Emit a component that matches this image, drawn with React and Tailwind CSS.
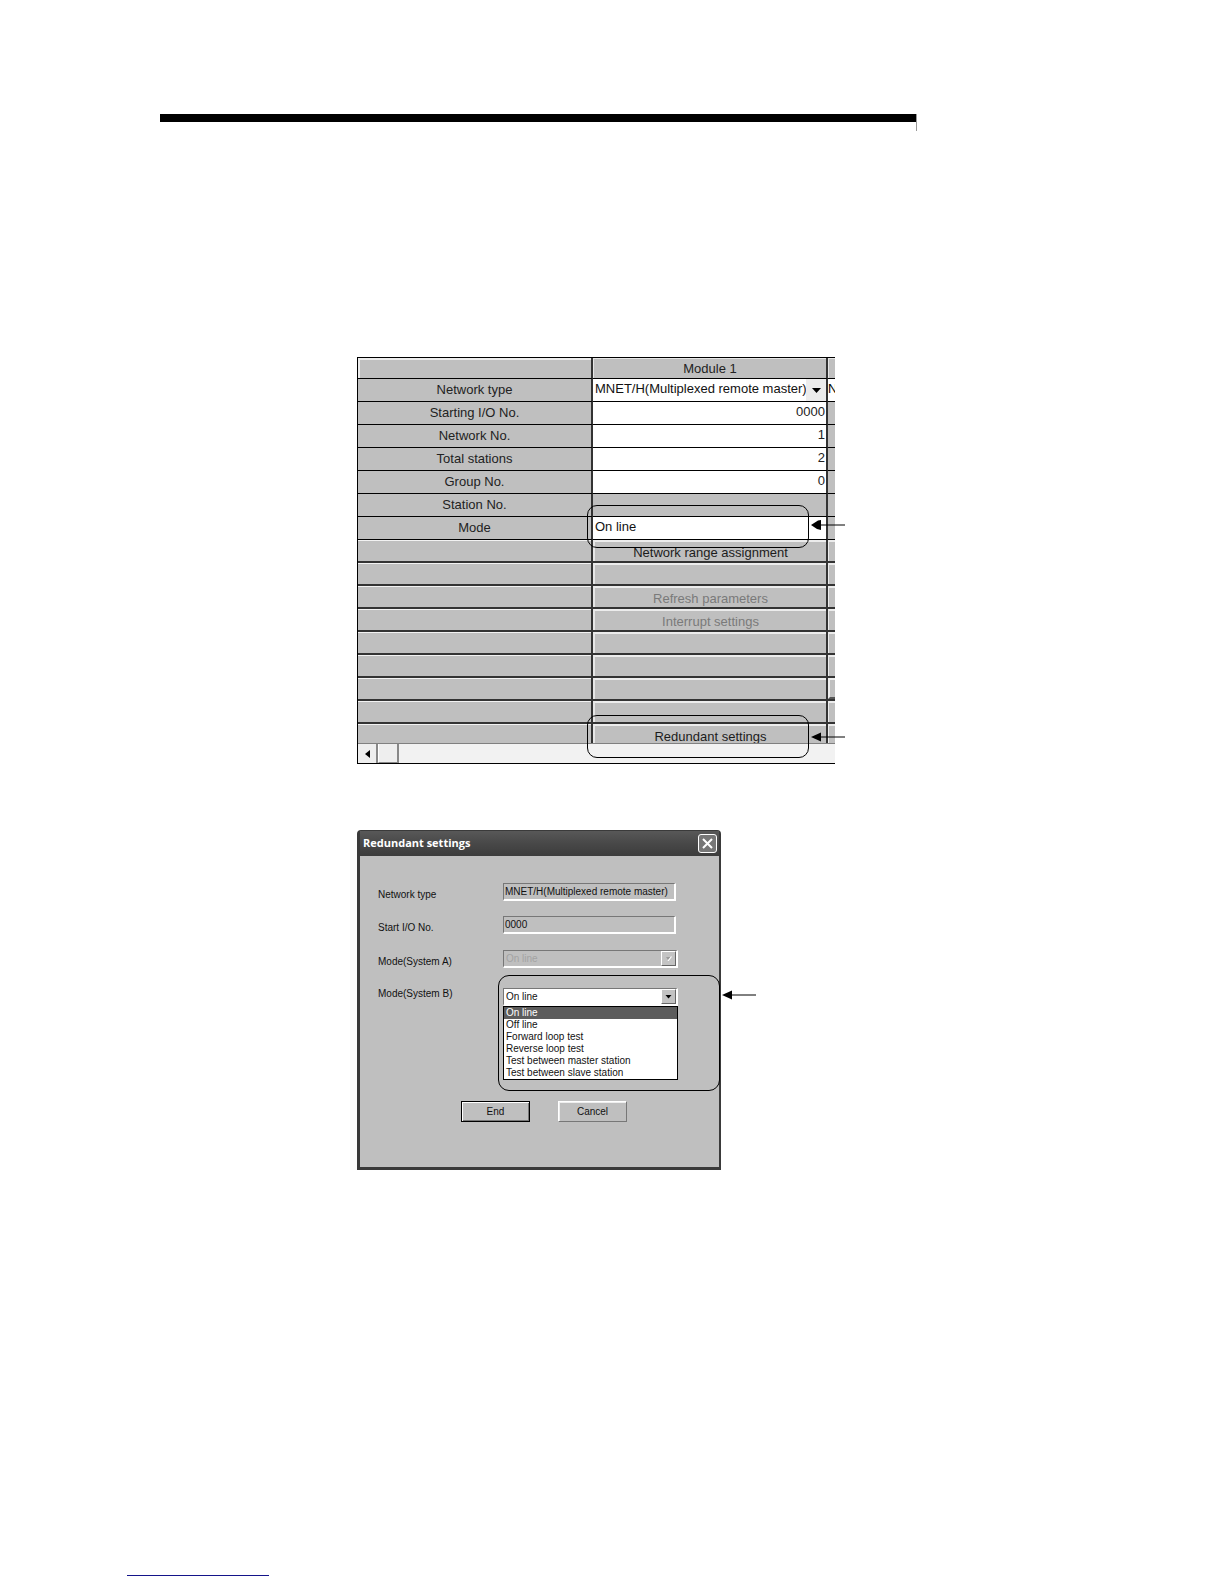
import React from "react";

function Bevel({ children, disabled, label }) {
  return (
    <button
      type="button"
      disabled={disabled}
      aria-label={label}
      className="block h-full w-full border-t-2 border-l-2 border-t-[#ececec] border-l-[#e6e6e6] bg-[#bfbfbf] text-center leading-[22px] text-[#1c1c1c] disabled:text-[#7a7a7a]"
    >
      {children}
    </button>
  );
}

function NumberCell({ id, value }) {
  return (
    <input
      id={id}
      defaultValue={value}
      className="block h-full w-full bg-white pr-px pb-1 text-right text-[#222] outline-none"
    />
  );
}

function GridSelect({ id, value, arrow }) {
  return (
    <div className="relative h-full bg-white">
      <select
        id={id}
        className="block h-full w-full appearance-none bg-white pb-1 pl-[2px] text-[#111] outline-none"
      >
        <option>{value}</option>
      </select>
      {arrow && (
        <span className="pointer-events-none absolute top-0 right-0 flex h-full w-5 items-center justify-center bg-[#ececec]">
          <svg viewBox="0 0 9 5" className="h-[5px] w-[9px]">
            <path d="M0 0h9L4.500 5z" />
          </svg>
        </span>
      )}
    </div>
  );
}

const rows = [
  { id: "network-type", label: "Network type", cell: <GridSelect id="network-type" value="MNET/H(Multiplexed remote master)" arrow />, next: "N" },
  { id: "start-io", label: "Starting I/O No.", cell: <NumberCell id="start-io" value="0000" /> },
  { id: "network-no", label: "Network No.", cell: <NumberCell id="network-no" value="1" /> },
  { id: "stations", label: "Total stations", cell: <NumberCell id="stations" value="2" /> },
  { id: "group-no", label: "Group No.", cell: <NumberCell id="group-no" value="0" /> },
  { label: "Station No." },
  { id: "mode", label: "Mode", cell: <GridSelect id="mode" value="On line" /> },
  { button: "Network range assignment" },
  { button: "" },
  { button: "Refresh parameters", disabled: true },
  { button: "Interrupt settings", disabled: true },
  { button: "" },
  { button: "" },
  { button: "", focus: true },
  { button: "" },
  { button: "Redundant settings", last: true },
];

function Arrow({ blunt }) {
  return (
    <svg viewBox="0 0 34 12" className="h-3 w-[34px]">
      <path d="M8 6h26" stroke="#000" strokeWidth="1" />
      {blunt ? <path d="M0 6L7 1.500L10 1v10l-4-1z" /> : <path d="M0 6l10-4.500v9z" />}
    </svg>
  );
}

function ModuleTable() {
  return (
    <figure className="relative w-full max-w-[478px]">
      <div className="overflow-hidden border-y border-l border-black text-[13px]">
        <table className="w-full table-fixed border-separate border-spacing-0">
          <colgroup>
            <col className="w-[235px]" />
            <col className="w-[235px]" />
            <col />
          </colgroup>
          <thead>
            <tr className="h-[21px] bg-[#bfbfbf]">
              <td className="h-[21px] border-r-2 border-b border-r-[#333] border-b-black p-0">
                <div className="h-5 border-t-2 border-l-2 border-[#ececec]" />
              </td>
              <th scope="col" className="border-r-2 border-b border-r-[#333] border-b-black p-0 font-normal text-[#222]">
                <div className="h-5 border-t border-l border-[#e6e6e6] leading-5">Module 1</div>
              </th>
              <td className="border-b border-black p-0">
                <div className="h-5 border-t border-l border-[#e6e6e6]" />
              </td>
            </tr>
          </thead>
          <tbody>
            {rows.map((row, i) => {
              const isButton = row.button !== undefined;
              const edge = row.last ? "border-b-0" : isButton ? "border-b-2 border-b-[#333]" : "border-b border-b-black";
              const height = row.last ? "h-[19px]" : isButton ? "h-[21px]" : "h-[22px]";
              return (
                <tr key={i} className="bg-[#bfbfbf]">
                  <th scope="row" className={`border-r-2 border-r-[#333] p-0 font-normal text-[#222] ${edge}`}>
                    {isButton ? (
                      <div className={`border-t border-t-[#f2f2f2] ${height}`} />
                    ) : (
                      <label htmlFor={row.id} className={`block leading-[22px] ${height}`}>{row.label}</label>
                    )}
                  </th>
                  <td className={`border-r-2 border-r-[#333] p-0 ${edge}`}>
                    <div className={`overflow-hidden ${height}`}>
                      {isButton ? (
                        <Bevel disabled={row.disabled} label={row.button ? undefined : "Unassigned"}>
                          {row.button}
                        </Bevel>
                      ) : (
                        row.cell
                      )}
                    </div>
                  </td>
                  <td className={`p-0 ${edge}`}>
                    <div
                      className={`overflow-hidden ${height} ${
                        row.next ? "bg-white leading-5" : row.focus ? "border-2 border-r-0 border-[#555] border-t-[#eee] border-l-[#eee]" : isButton ? "border-t-2 border-l border-[#ececec]" : ""
                      }`}
                    >
                      {row.next}
                    </div>
                  </td>
                </tr>
              );
            })}
          </tbody>
        </table>
        <div className="flex h-5 border-t border-[#808080] bg-[#f2f2f2]">
          <button type="button" aria-label="Scroll left" className="flex w-5 items-center justify-center border-r-2 border-[#888] bg-[#eeeeee]">
            <svg viewBox="0 0 5 8" className="h-2 w-[5px]">
              <path d="M5 0v8L0 4z" />
            </svg>
          </button>
          <span className="w-[21px] border-r-2 border-b border-l border-[#888] border-l-white bg-[#eeeeee]" />
        </div>
      </div>

      <div className="pointer-events-none absolute top-[148px] left-[230px] flex items-start gap-[2px]">
        <span className="h-[43px] w-[222px] rounded-[10px] border border-black" />
        <span className="mt-[14px]">
          <Arrow blunt />
        </span>
      </div>
      <div className="pointer-events-none absolute top-[358px] left-[230px] flex items-center gap-[2px]">
        <span className="h-[43px] w-[222px] rounded-[10px] border border-black" />
        <Arrow />
      </div>
    </figure>
  );
}

const modes = [
  "On line",
  "Off line",
  "Forward loop test",
  "Reverse loop test",
  "Test between master station",
  "Test between slave station",
];

const sunken = "h-[18px] border-t border-l border-r-2 border-b-2 border-t-[#777] border-l-[#777] border-r-white border-b-white";

function Combo({ id, options, disabled }) {
  return (
    <div className={`relative w-[175px] ${disabled ? "bg-[#bfbfbf]" : "bg-white"} ${sunken}`}>
      <select
        id={id}
        disabled={disabled}
        className="block h-full w-full appearance-none pl-[2px] leading-[14px] outline-none disabled:text-[#a3a3a3] disabled:opacity-100"
      >
        {options.map((o) => (
          <option key={o}>{o}</option>
        ))}
      </select>
      <span className="pointer-events-none absolute top-0 right-0 flex h-[15px] w-[15px] items-center justify-center border border-t-white border-r-[#666] border-b-[#666] border-l-white bg-[#c3c3c3]">
        <svg viewBox="0 0 7 5" className="h-[5px] w-[7px]">
          {disabled ? (
            <>
              <path d="M1 1h5L3 4z" fill="#999" />
              <path d="M6.500 0.500L3 5" stroke="#fff" strokeWidth="1.200" />
            </>
          ) : (
            <path d="M0.500 1h6L3.500 4.500z" />
          )}
        </svg>
      </span>
    </div>
  );
}

function SettingsDialog() {
  return (
    <figure className="relative w-full max-w-[364px]">
      <section
        aria-label="Redundant settings"
        className="rounded-t-[4px] border-t border-r-[2px] border-b-[3px] border-l-[3px] border-[#3a3a3a] bg-[#bfbfbf] text-[10px] text-[#111]"
      >
        <header className="flex h-[25px] items-center justify-between bg-linear-to-b from-[#585858] via-[#484848] to-[#3c3c3c] pr-[2px] pl-[3px]">
          <h2 className="font-['Open_Sans','Noto_Sans',sans-serif] text-[11px] font-bold text-white">Redundant settings</h2>
          <button type="button" aria-label="Close" className="flex h-[19px] w-[19px] items-center justify-center rounded-[3px] border border-white bg-[#777]">
            <svg viewBox="0 0 11 11" className="h-[11px] w-[11px]">
              <path d="M1 1l9 9M10 1l-9 9" stroke="#fff" strokeWidth="2" />
            </svg>
          </button>
        </header>
        <form className="h-[311px] pt-[27px] pl-[18px] leading-3">
          <div className="flex items-end">
            <label htmlFor="d-type" className="w-[125px]">Network type</label>
            <input id="d-type" readOnly defaultValue="MNET/H(Multiplexed remote master)" className={`w-[173px] pl-px outline-none ${sunken}`} />
          </div>
          <div className="mt-[15px] flex items-end">
            <label htmlFor="d-io" className="w-[125px]">Start I/O No.</label>
            <input id="d-io" readOnly defaultValue="0000" className={`w-[173px] pl-px outline-none ${sunken}`} />
          </div>
          <div className="mt-4 flex items-end">
            <label htmlFor="d-a" className="w-[125px]">Mode(System A)</label>
            <Combo id="d-a" options={["On line"]} disabled />
          </div>
          <div className="mt-5 flex items-start">
            <label htmlFor="d-b" className="w-[125px]">Mode(System B)</label>
            <div className="relative">
              <Combo id="d-b" options={modes} />
              <ul role="listbox" aria-label="Mode(System B)" className="absolute top-full left-0 w-[175px] border border-black bg-white">
                {modes.map((m, i) => (
                  <li
                    key={m}
                    role="option"
                    aria-selected={i === 0}
                    className={`pl-[2px] leading-3 ${i === 0 ? "bg-[#5c5c5c] text-white" : ""}`}
                  >
                    {m}
                  </li>
                ))}
              </ul>
            </div>
          </div>
          <div className="mt-[95px] ml-[83px] flex gap-7">
            <button type="button" className="h-[21px] w-[69px] border border-black bg-[#bfbfbf] shadow-[inset_1px_1px_0_#fff,inset_-1px_-1px_0_#777]">
              End
            </button>
            <button type="button" className="h-[21px] w-[69px] border border-t-white border-r-[#777] border-b-[#777] border-l-white bg-[#bfbfbf] shadow-[inset_1px_1px_0_#eee]">
              Cancel
            </button>
          </div>
        </form>
      </section>
      <div className="pointer-events-none absolute top-[145px] left-[141px] flex items-start gap-[2px]">
        <span className="h-[116px] w-[222px] rounded-[11px] border border-black" />
        <span className="mt-[14px]">
          <Arrow />
        </span>
      </div>
    </figure>
  );
}

export default function App() {
  return (
    <div className="flex min-h-screen flex-col bg-white font-['Liberation_Sans',Arial,sans-serif]">
      <div className="mt-[114px] ml-40 h-[17px] max-w-[757px] border-r border-[#999]">
        <div className="h-2 bg-black" />
      </div>
      <main className="mt-[226px] ml-[357px] flex flex-col gap-[66px]">
        <ModuleTable />
        <SettingsDialog />
      </main>
      <footer className="mt-auto ml-[127px] pb-2">
        <div className="h-px w-[142px] bg-[#14148a]" />
      </footer>
    </div>
  );
}
